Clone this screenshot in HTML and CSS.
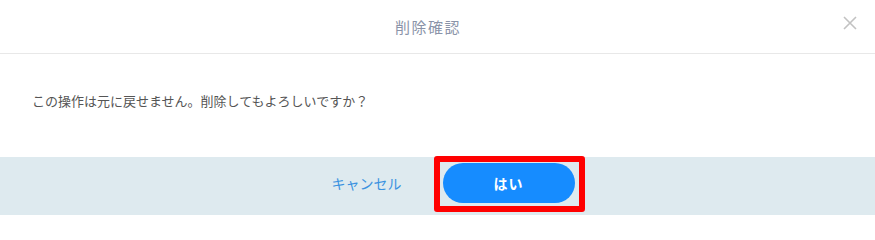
FILE: index.html
```html
<!DOCTYPE html>
<html lang="ja">
<head>
<meta charset="utf-8">
<link rel="stylesheet" href="styles.css">
</head>
<body>
<div class="modal">
  <div class="modal-header">
    <span class="modal-title">削除確認</span>
    <button class="close" aria-label="close">
      <svg width="14" height="14" viewBox="0 0 14 14"><path d="M1 1L13 13M13 1L1 13" stroke="#c2c2c2" stroke-width="1.6" fill="none"/></svg>
    </button>
  </div>
  <div class="modal-body">この操作は元に戻せません。削除してもよろしいですか？</div>
  <div class="modal-footer">
    <button class="btn btn-cancel">キャンセル</button>
    <button class="btn btn-ok">はい</button>
  </div>
</div>
</body>
</html>
```

FILE: styles.css
```css
html, body {
  margin: 0;
  padding: 0;
  background: #fff;
}
body {
  font-family: "Noto Sans CJK JP", "Noto Sans", sans-serif;
  width: 875px;
  height: 215px;
  overflow: hidden;
}
.modal {
  display: flex;
  flex-direction: column;
}
.modal-header {
  position: relative;
  height: 53px;
  border-bottom: 1px solid #e8e8e8;
  display: flex;
  align-items: center;
  justify-content: center;
}
.modal-title {
  font-size: 15px;
  letter-spacing: 1.5px;
  color: #8a93a8;
  line-height: 20px;
  margin-right: 19px;
  margin-top: 1px;
}
.close {
  position: absolute;
  right: 18px;
  top: 16px;
  width: 14px;
  height: 14px;
  padding: 0;
  border: 0;
  background: none;
  display: flex;
}
.modal-body {
  height: 103px;
  box-sizing: border-box;
  padding: 37px 32px 0;
  font-size: 13px;
  line-height: 20px;
  color: #555;
}
.modal-footer {
  height: 58px;
  box-sizing: border-box;
  background: #deeaef;
  padding-top: 6px;
  display: flex;
  justify-content: center;
  gap: 10px;
}
.btn {
  width: 132px;
  height: 40px;
  border: 0;
  padding: 0;
  font-family: inherit;
  font-size: 14px;
  cursor: pointer;
}
.btn-cancel {
  background: transparent;
  color: #3a92e0;
}
.btn-ok {
  position: relative;
  background: #168cff;
  color: #fff;
  border-radius: 20px;
  font-weight: 600;
  letter-spacing: 1px;
}
.btn-ok::after {
  content: "";
  position: absolute;
  left: -9px;
  right: -10px;
  top: -7px;
  bottom: -9px;
  border: 6px solid #ff0000;
  border-radius: 3px;
}
```
